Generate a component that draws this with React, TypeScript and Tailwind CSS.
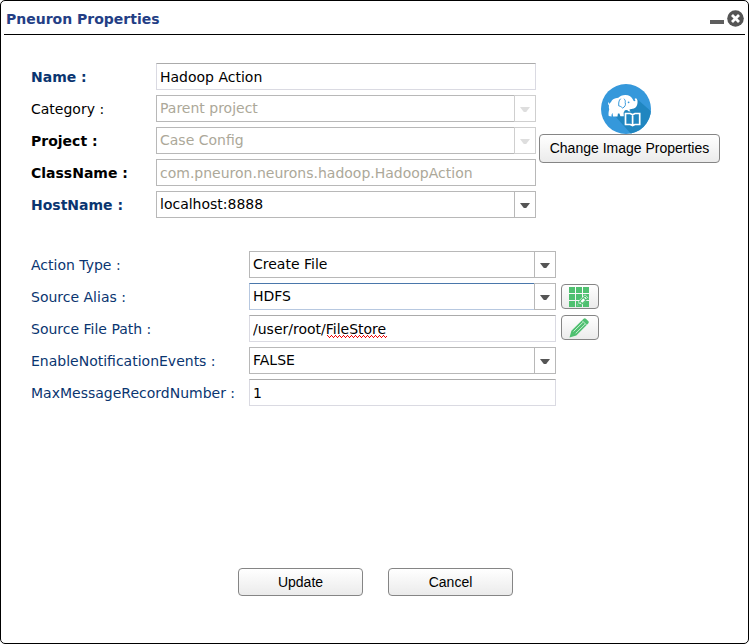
import type { ReactNode } from "react";

const fieldText =
  "font-['Verdana','DejaVu_Sans',sans-serif] text-[14px] leading-5";

function Row({
  id,
  label,
  labelClass,
  children,
}: {
  id: string;
  label: string;
  labelClass: string;
  children: ReactNode;
}) {
  return (
    <div className="flex items-center">
      <label htmlFor={id} className={`shrink-0 whitespace-nowrap pt-px ${labelClass}`}>
        {label} :
      </label>
      {children}
    </div>
  );
}

function Select({
  id,
  value,
  disabled = false,
  active = false,
}: {
  id: string;
  value: string;
  disabled?: boolean;
  active?: boolean;
}) {
  return (
    <div className="relative min-w-0 flex-1">
      <select
        id={id}
        disabled={disabled}
        defaultValue={value}
        className={`block h-[27px] w-full appearance-none rounded-none border bg-white pr-6 pb-0.5 pl-[3px] opacity-100 outline-none ${fieldText} ${
          active
            ? "border-[#b7c8e0] border-t-[#4a77ab]"
            : "border-[#b8b8b8]"
        } ${disabled ? "text-[#aca899]" : "text-black"}`}
      >
        <option>{value}</option>
      </select>
      <span
        className={`pointer-events-none absolute inset-y-0 right-0 flex w-[22px] items-center justify-center border bg-white pt-0.5 ${
          disabled ? "border-[#cfcfcf]" : "border-[#b8b8b8]"
        }`}
      >
        <svg
          viewBox="0 0 10 5"
          className={`h-[5px] w-2.5 ${disabled ? "fill-[#dedede]" : "fill-[#555555]"}`}
          aria-hidden="true"
        >
          <path d="M0 0h10L6.2 5H3.8z" />
        </svg>
      </span>
    </div>
  );
}

function TextInput({
  id,
  value,
  disabled = false,
}: {
  id: string;
  value: string;
  disabled?: boolean;
}) {
  return (
    <input
      id={id}
      type="text"
      defaultValue={value}
      disabled={disabled}
      className={`block h-[27px] w-full min-w-0 flex-1 border bg-white pt-px pl-[3px] outline-none ${fieldText} ${
        disabled
          ? "border-[#b8b8b8] text-[#aca899]"
          : "border-[#dadae2] border-t-[#ababab] text-black"
      }`}
    />
  );
}

const buttonClass =
  "rounded-[4px] border border-[#858585] bg-linear-to-b from-white to-[#ebebeb] font-['Arial','Liberation_Sans',sans-serif] text-[14px] leading-5 text-black";

function HadoopIcon() {
  return (
    <svg viewBox="0 0 50 50" className="size-[50px]" role="img" aria-label="Hadoop">
      <defs>
        <clipPath id="disc">
          <circle cx="25" cy="25" r="25" />
        </clipPath>
      </defs>
      <g clipPath="url(#disc)">
        <rect width="50" height="50" fill="#3598db" />
        <path d="M36 15l16 14v22H31L14 32l9-7z" fill="#2086c0" />
        <path
          fill="#fff"
          d="M10 18c1-2.300 3.500-4.100 7.300-4.200 1.500-1.600 4-2.900 7-2.900 3.800 0 6.500 1.700 7.600 4.600.5 1.600 1.700 2.200 2.400 1.200.4-.7-1-1.200-.5-2 .8-1.100 2.500-.4 2.700 2.100.3 3.800-1.100 6.900-3.600 7.700-1.700.6-3.400.3-4.600 1.200l1.200 1.900-2-.4-1.400-1.300-2.200.4-1.300 2.400.2 3.600h-3.400l-1-2.900-1.500.2-.4 3-4.400-.2-.7-3.700-.9 2.300.1 1.500-2.900-.5c-.4-2.400-.1-4.600.5-6.600-.4-1.500-.5-2.900-.2-4-.9-.9-1.100-2-.5-3.400.7 1 .8 1.700.5 2.500.4-.9 1.100-1.700 2-2.500z"
        />
        <path
          d="M19.700 14.700c-2 1.400-2.200 4.800-1.900 7.300 1.500.1 2.500.8 3.700 2 2.500-.8 3.500-3.200 2.700-5.600.4-1.600-.2-2.900-1.400-3.700"
          fill="none"
          stroke="#3598db"
          strokeWidth="1"
        />
        <circle cx="27.600" cy="18.300" r=".9" fill="#3598db" />
        <path
          d="M24.500 29.500h4.800l2.300 1.200 2.300-1.200h4.800v11h-4.800l-2.300 1.100-2.300-1.100h-4.800zM31.600 30.800v10.500"
          fill="#2086c0"
          stroke="#fff"
          strokeWidth="1.700"
        />
      </g>
    </svg>
  );
}

function GridEditIcon() {
  return (
    <svg viewBox="0 0 20 20" className="size-5" aria-hidden="true">
      <path
        fill="#4fc070"
        d="M0 0h6v6H0zM7 0h6v6H7zM14 0h6v6h-6zM0 7h6v6H0zM7 7h6v6H7zM14 7h6v6h-6zM0 14h6v6H0zM7 14h6v6H7zM14 14h6v6h-6z"
      />
      <path d="M8.500 18.500l1-4.500 6.500-6.500 3.500 3.500-6.500 6.500z" fill="#fff" />
      <path
        d="M9.500 18l.8-3.400 5.700-5.700 2.500 2.500-5.700 5.700zM14.300 10.500l2.500 2.500M11 14.300l2.200 2.200"
        fill="none"
        stroke="#4fc070"
        strokeWidth="1.100"
      />
    </svg>
  );
}

function PencilIcon() {
  return (
    <svg viewBox="0 0 20 20" className="size-5" aria-hidden="true">
      <path d="M.5 19.500l1.900-6.800L14.600.8c.8-.8 1.500-.8 2.300 0l2.300 2.300c.8.8.8 1.600 0 2.400L7.300 17.400z" fill="#4fc070" />
      <path
        d="M13.200 2.700l4.200 4.200M4.500 13.500l9.300-9.100M6.700 15.400l9.400-9.300"
        stroke="#fff"
        strokeWidth=".7"
        fill="none"
      />
    </svg>
  );
}

export default function App() {
  const navy = "text-[#0a3570]";
  return (
    <main
      className={`mr-px flex min-h-screen flex-col rounded-[5px] border border-black bg-white ${fieldText}`}
    >
      <header className="mx-[3px] flex h-[34px] items-center justify-between border-b border-black pt-0.5 pr-px pl-0.5">
        <h1 className="font-bold text-[#233e85]">Pneuron Properties</h1>
        <div className="flex items-center gap-[3px]">
          <button type="button" aria-label="Minimize" className="flex h-[17px] items-end pb-[3px]">
            <span className="block h-1 w-[14px] bg-[#5e5e5e]" />
          </button>
          <button type="button" aria-label="Close">
            <svg viewBox="0 0 17 17" className="block size-[17px]" aria-hidden="true">
              <circle cx="8.500" cy="8.500" r="8.300" fill="#555" />
              <path d="M5 5l7 7M12 5l-7 7" stroke="#fff" strokeWidth="2.800" />
            </svg>
          </button>
        </div>
      </header>

      <form className="flex flex-1 flex-col" onSubmit={(e) => e.preventDefault()}>
        <div className="flex gap-[3px] pt-7 pr-7 pl-[30px]">
          <div className="flex min-w-0 flex-1 flex-col gap-[5px]">
            <Row id="name" label="Name" labelClass={`w-[125px] font-bold ${navy}`}>
              <TextInput id="name" value="Hadoop Action" />
            </Row>
            <Row id="category" label="Category" labelClass="w-[125px] text-black">
              <Select id="category" value="Parent project" disabled />
            </Row>
            <Row id="project" label="Project" labelClass="w-[125px] font-bold text-black">
              <Select id="project" value="Case Config" disabled />
            </Row>
            <Row id="class" label="ClassName" labelClass="w-[125px] font-bold text-black">
              <TextInput id="class" value="com.pneuron.neurons.hadoop.HadoopAction" disabled />
            </Row>
            <Row id="host" label="HostName" labelClass={`w-[125px] font-bold ${navy}`}>
              <Select id="host" value="localhost:8888" />
            </Row>
          </div>
          <div className="flex w-[181px] shrink-0 flex-col items-center pt-[21px]">
            <div className="pr-2">
              <HadoopIcon />
            </div>
            <button type="button" className={`h-[29px] w-full whitespace-nowrap pb-0.5 ${buttonClass}`}>
              Change Image Properties
            </button>
          </div>
        </div>

        <div className="flex gap-[5px] pt-[33px] pr-7 pl-[30px]">
          <div className="flex w-[525px] min-w-0 flex-col gap-[5px]">
            <Row id="action" label="Action Type" labelClass={`w-[218px] ${navy}`}>
              <Select id="action" value="Create File" />
            </Row>
            <Row id="alias" label="Source Alias" labelClass={`w-[218px] ${navy}`}>
              <Select id="alias" value="HDFS" active />
            </Row>
            <Row id="path" label="Source File Path" labelClass={`w-[218px] ${navy}`}>
              <div className="relative min-w-0 flex-1">
                <TextInput id="path" value="/user/root/FileStore" />
                <svg
                  className="pointer-events-none absolute top-5 left-[78px] h-[3px] w-[60px]"
                  aria-hidden="true"
                >
                  <defs>
                    <pattern id="squiggle" width="4" height="3" patternUnits="userSpaceOnUse">
                      <path
                        d="M0 0h1v1H0zM1 1h1v1H1zM2 2h1v1H2zM3 1h1v1H3z"
                        fill="#f00000"
                        shapeRendering="crispEdges"
                      />
                    </pattern>
                  </defs>
                  <rect width="60" height="3" fill="url(#squiggle)" />
                </svg>
              </div>
            </Row>
            <Row id="events" label="EnableNotificationEvents" labelClass={`w-[218px] ${navy}`}>
              <Select id="events" value="FALSE" />
            </Row>
            <Row id="max" label="MaxMessageRecordNumber" labelClass={`w-[218px] ${navy}`}>
              <TextInput id="max" value="1" />
            </Row>
          </div>
          <div className="flex flex-col gap-1.5 pt-[33px]">
            <button
              type="button"
              aria-label="Edit source alias"
              className={`flex h-[25px] w-[38px] items-center justify-center pr-0.5 ${buttonClass}`}
            >
              <GridEditIcon />
            </button>
            <button
              type="button"
              aria-label="Edit source file path"
              className={`flex h-[25px] w-[38px] items-center justify-center pr-0.5 ${buttonClass}`}
            >
              <PencilIcon />
            </button>
          </div>
        </div>

        <div className="mt-auto flex justify-center gap-[25px] pt-8 pb-[47px] pl-0.5">
          <button type="submit" className={`h-7 w-[125px] ${buttonClass}`}>
            Update
          </button>
          <button type="button" className={`h-7 w-[125px] ${buttonClass}`}>
            Cancel
          </button>
        </div>
      </form>
    </main>
  );
}
